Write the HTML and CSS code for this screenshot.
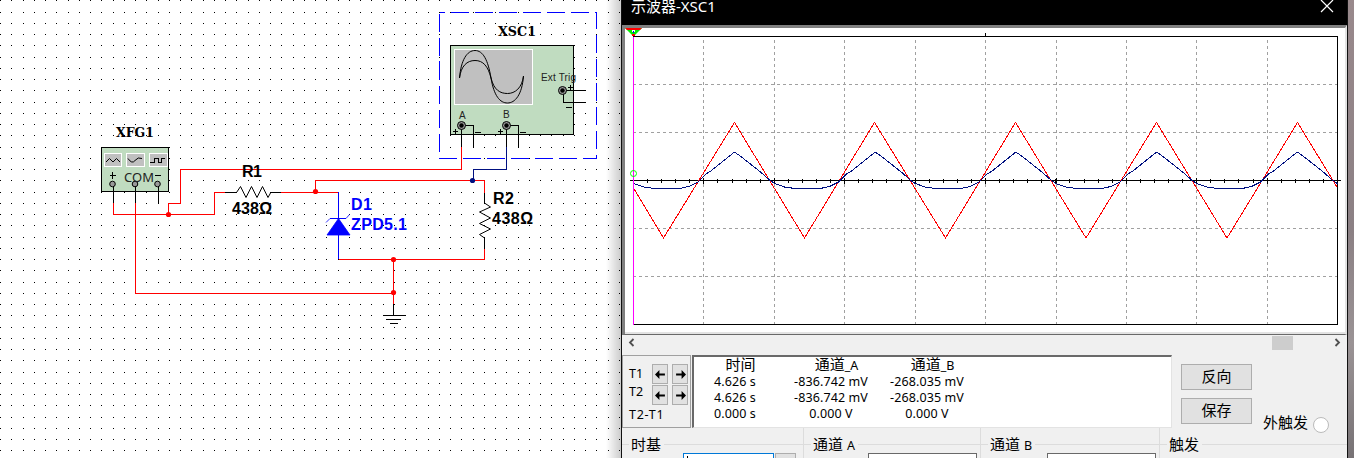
FILE: index.html
```html
<!DOCTYPE html>
<html lang="zh-CN">
<head>
<meta charset="utf-8">
<title>示波器-XSC1</title>
<link rel="stylesheet" href="styles.css">
</head>
<body>
<main class="desktop">
  <section class="schematic">
    <svg class="circuit" width="621" height="458" viewBox="0 0 621 458">
      <defs>
        <pattern id="dots" width="45" height="45" patternUnits="userSpaceOnUse">
          <path d="M0 .5h1m10 0h1m11 0h1m10 0h1M0 12.5h1m10 0h1m11 0h1m10 0h1M0 23.5h1m10 0h1m11 0h1m10 0h1M0 34.5h1m10 0h1m11 0h1m10 0h1" stroke="#000"/>
        </pattern>
        <linearGradient id="shade"><stop offset="0" stop-color="#000" stop-opacity="0"/><stop offset="1" stop-color="#000" stop-opacity=".2"/></linearGradient>
      </defs>
      <rect width="621" height="458" fill="url(#dots)"/>
      <rect x="606" width="15" height="458" fill="url(#shade)"/>
      <g class="crisp">
        <rect class="selection" x="439.5" y="12.5" width="157" height="146"/>
        <rect class="body" x="450.5" y="45.5" width="123" height="89"/>
        <rect x="454.5" y="49.5" width="78" height="55" fill="#c0c0c0" stroke="#fff"/>
        <rect class="body" x="101.5" y="147.5" width="67" height="44"/>
        <path d="M104.500 153.500h17v13h-17zM126.500 153.500h18v13h-18zM149.500 153.500h18v13h-18z" fill="#c0c0c0" stroke="#fff"/>
        <path class="red" d="M461.500 147v22.500h-281v34h-12v11M113.500 203v11.500h101v-22H225M281 192.500h57M315.500 192v-11.500h169V193M484.500 249v10.500h-146M135.500 203v90h258M393.500 259v46"/>
        <path class="navy" d="M506.500 147v22.500h-33v11"/>
        <path class="black" d="M461.500 125v22M461 125.500h12.500V147M506.500 125v22M506 125.500h12.500V147M562 90.500h24M563.500 90v12.500H586M113.500 184v19M135.500 184v19M158.500 184v19M225 192.500h12M270 192.500h11M484.500 193v10M484.500 238v11M393.500 304v11M383 315.500h23M386 319.500h15M390 323.500h8M150 162.500h4.500v-4h4v4h3v-4h3"/>
        <path d="M338.500 192v67M330 218.500h16" stroke="#00f" fill="none"/>
      </g>
      <path d="M338.500 218.500L350 235h-23zM346 218.500l3.500-4M330 218.500l-4 4" fill="#00f" stroke="#00f" stroke-width=".8"/>
      <path class="black" d="M236.500 192.500l4-6 5.500 11 5.500-11 5.500 11 5.500-11 5.500 11 2.500-4.500M484.500 203l6 4-11 5 11 6-11 5.500 11 5.500-11 5.500 5 3.500"/>
      <path class="black" d="M459.500 78C461 60 467 50.500 475 50.500S488 60 491 78 500 103 507.500 103 522 95 523.500 76M459.500 78C461 66 467 60.500 475 60.500S488 66 491 78 500 93.500 507.500 93.500 522 88 523.500 76M106 162l3.500-3.500 3.500 3.500 3.500-3.500 3.500 3.500M128 158.500q4 6 7 2t7-2"/>
      <g fill="#999" stroke="#000"><circle cx="461.500" cy="125.500" r="4"/><circle cx="506.500" cy="125.500" r="4"/><circle cx="562.500" cy="90.500" r="4"/><circle cx="112.500" cy="184" r="2.800"/><circle cx="135" cy="184" r="2.800"/><circle cx="157.500" cy="184" r="2.800"/></g>
      <g><circle cx="461.500" cy="125.500" r="2.200"/><circle cx="506.500" cy="125.500" r="2.200"/><circle cx="562.500" cy="90.500" r="2.200"/></g>
      <g fill="#f00"><circle cx="168.500" cy="214.500" r="2.600"/><circle cx="315.500" cy="191.500" r="2.600"/><circle cx="393.500" cy="259.500" r="2.600"/><circle cx="393.500" cy="292.500" r="2.600"/></g>
      <circle cx="472.500" cy="180.500" r="2.600" fill="#001080"/>
      <g class="name"><text x="498" y="36" textLength="38" lengthAdjust="spacingAndGlyphs">XSC1</text><text x="116" y="137" textLength="38" lengthAdjust="spacingAndGlyphs">XFG1</text></g>
      <g class="value"><text x="242" y="177" textLength="20">R1</text><text x="232" y="214" textLength="40">438Ω</text><text x="493" y="204" textLength="21">R2</text><text x="492" y="224" textLength="41">438Ω</text><g fill="#00f"><text x="351" y="210" textLength="21">D1</text><text x="351" y="230" textLength="56">ZPD5.1</text></g></g>
      <g class="pin"><text x="541" y="81" textLength="35">Ext Trig</text><text x="459" y="119">A</text><text x="503" y="118">B</text></g>
      <path class="black crisp" d="M453 131.500h5M455.500 129v5M498 131.500h5M500.500 129v5M568 87.500h5M570.500 85v5M475 132.500h6M520 132.500h6M566 107.500h6M110 175.500h6M112.500 172v7M155 175.500h6"/>
      <text class="com" x="124" y="182" textLength="30">COM</text>
    </svg>
  </section>

  <section class="window">
    <header class="titlebar"><span class="caption">示波器-XSC1</span>
      <svg class="close" width="14" height="14" viewBox="0 0 14 14"><path d="M1 1l12 12M13 1L1 13" stroke="#fff" stroke-width="1.200"/></svg>
    </header>
    <div class="scope">
      <svg width="720" height="304" viewBox="625 28 720 304">
        <defs>
          <path id="wave" d="M0 152l7 5 19 15 9 8 5 3.500 10 3.500 7 1h31l7-1.500 9-4.500 8-8 5-3L140.700 152"/>
          <clipPath id="plot"><rect x="633" y="36" width="705" height="289"/></clipPath>
        </defs>
        <g class="crisp">
          <path class="grid" d="M703.500 40v284M774.500 40v284M844.500 40v284M915.500 40v284M985.500 40v284M1056.500 40v284M1126.500 40v284M1196.500 40v284M1267.500 40v284M633 84.500h704M633 132.500h704M633 228.500h704M633 276.500h704"/>
          <path class="black" d="M633 36.500h704.500v288H633M985.500 33v4M630 180.500h711"/>
          <path class="black" d="M703.500 178v6M774.500 178v6M844.500 178v6M915.500 178v6M985.500 178v6M1056.500 178v6M1126.500 178v6M1196.500 178v6M1267.500 178v6"/>
          <path d="M633 181h705" stroke="#000" stroke-width="4" stroke-dasharray="1 13.080" fill="none"/>
        </g>
        <path class="red trace" d="M633.500 188L663.500 238 734.500 122.500 804.500 238 874.500 122.500 945.500 238 1015.500 122.500 1086 238 1156.500 122.500 1227 238 1297.500 122.500 1337 187"/>
        <g class="navy trace" clip-path="url(#plot)"><use href="#wave" x="593.800"/><use href="#wave" x="734.500"/><use href="#wave" x="875.200"/><use href="#wave" x="1015.900"/><use href="#wave" x="1156.600"/><use href="#wave" x="1297.300"/></g>
        <rect x="633" y="37" width="1" height="288" fill="#f0f"/>
        <circle cx="633.500" cy="173.500" r="3" fill="none" stroke="#0f0"/>
        <path d="M625 28h17l-8 8h-1z" fill="#0e0"/><path d="M625 28h17l-2 2h-13z" fill="#f00"/><path d="M632 30h3v2h-3z" fill="#fff"/><path d="M633 31h1v2h-1z" fill="#00f"/><path d="M632 34h3v2h-3z" fill="#f00"/>
      </svg>
    </div>
    <div class="scroll">
      <svg width="7" height="9" viewBox="0 0 7 9"><path d="M5.500 1L2 4.500 5.500 8" class="chev"/></svg>
      <i class="thumb"></i>
      <svg width="7" height="9" viewBox="0 0 7 9"><path d="M1.500 1L5 4.500 1.500 8" class="chev"/></svg>
    </div>
    <div class="readout">
      <div class="cursors">
        <div class="crow"><span>T1</span><b class="step"><svg viewBox="0 0 10 10"><path d="M0 5l4-4v3h5v2H4v3z"/></svg></b><b class="step"><svg viewBox="0 0 10 10"><path d="M10 5L6 1v3H1v2h5v3z"/></svg></b></div>
        <div class="crow"><span>T2</span><b class="step"><svg viewBox="0 0 10 10"><path d="M0 5l4-4v3h5v2H4v3z"/></svg></b><b class="step"><svg viewBox="0 0 10 10"><path d="M10 5L6 1v3H1v2h5v3z"/></svg></b></div>
        <div class="diff">T2-T1</div>
      </div>
      <div class="table">
        <div class="col time"><span class="head">时间</span><span>4.626 s</span><span>4.626 s</span><span>0.000 s</span></div>
        <div class="col"><span class="head">通道<em>_A</em></span><span>-836.742 mV</span><span>-836.742 mV</span><span>0.000 V</span></div>
        <div class="col"><span class="head">通道<em>_B</em></span><span>-268.035 mV</span><span>-268.035 mV</span><span>0.000 V</span></div>
      </div>
      <div class="actions"><span class="btn">反向</span><span class="btn">保存</span></div>
      <div class="ext"><span>外触发</span><i class="radio"></i></div>
    </div>
    <div class="groups">
      <div class="group base"><div class="legend"><span>时基</span></div><i class="field focus"></i><i class="caret"></i><i class="spin"></i></div>
      <div class="group cha"><div class="legend"><span>通道 <em>A</em></span></div><i class="field"></i></div>
      <div class="group chb"><div class="legend"><span>通道 <em>B</em></span></div><i class="field"></i></div>
      <div class="group trig"><div class="legend"><span>触发</span></div></div>
    </div>
  </section>
  <div class="backdrop"></div>
</main>
</body>
</html>
```
FILE: styles.css
```css
* { box-sizing: border-box; }
body { margin: 0; overflow: hidden; background: #fff; font-family: "Noto Sans", "Noto Sans CJK SC", sans-serif; font-size: 12.5px; color: #000; }
em, i, b { font-style: normal; }
svg { display: block; }
.desktop { display: flex; width: 1354px; height: 458px; overflow: hidden; }
.schematic { width: 621px; flex: none; }
.crisp { shape-rendering: crispEdges; }
.black { stroke: #000; fill: none; }
.red { stroke: #f00; fill: none; }
.navy { stroke: #001080; fill: none; }
.trace { shape-rendering: crispEdges; stroke-width: 1; }
.selection { fill: none; stroke: #00f; stroke-dasharray: 18 6; stroke-dashoffset: 13; }
.body { fill: #c0dcc0; stroke: #000; }
.name { font: bold 13px "DejaVu Serif", serif; }
.value { font: bold 16px "Liberation Sans", sans-serif; }
.pin { font: 10px "Liberation Sans", sans-serif; fill: #222; }
.com { font: 13px "Noto Sans", sans-serif; fill: #222; }
.grid { stroke: #a0a0a0; stroke-dasharray: 3 3; fill: none; }

.window { width: 727px; flex: none; background: #f0f0f0; border: solid #111; border-width: 0 1px; display: flex; flex-direction: column; }
.titlebar { height: 25px; flex: none; background: #000; color: #fff; display: flex; justify-content: space-between; padding: 0 13px 0 9px; }
.caption { font-size: 15px; line-height: 20px; margin-top: -4px; white-space: nowrap; }
.close { margin-top: -1px; }
.scope { height: 310px; flex: none; background: #fff; border: 1px solid #696969; border-top: 3px solid #808080; border-left: 3px solid #808080; border-right: 2px solid #e3e3e3; box-shadow: inset 0 -2px #e3e3e3; overflow: hidden; }
.scroll { height: 20px; flex: none; display: flex; align-items: center; padding: 0 6px 5px 6px; }
.thumb { width: 21px; height: 14px; margin-left: 637px; margin-right: auto; background: #cdcdcd; }
.chev { fill: none; stroke: #505050; stroke-width: 1.800; }
.readout { height: 73px; flex: none; display: flex; }
.cursors { width: 69px; border: 1px solid #a0a0a0; padding: 8px 0 0 6px; }
.crow { display: flex; height: 20px; margin-bottom: 1px; gap: 4px; }
.crow span { width: 19px; line-height: 20px; }
.crow + .crow span { margin-top: -3px; }
.step { width: 16px; height: 20px; background: #e1e1e1; border: 1px solid #adadad; display: grid; place-items: center; }
.step svg { width: 11px; height: 11px; }
.diff { line-height: 17px; letter-spacing: .7px; }
.table { width: 480px; margin-left: 1px; background: #fff; border: 1px solid #e3e3e3; border-top: 2px solid #696969; border-left: 2px solid #696969; display: flex; padding-left: 8px; }
.col { width: 98px; display: flex; flex-direction: column; align-items: center; line-height: 16px; white-space: nowrap; letter-spacing: .1px; }
.col + .col + .col { width: 96px; margin-left: -1px; }
.time { width: 66px; margin: 0 14px 0 0; }
.head { height: 17px; line-height: 14px; font-family: "Noto Sans CJK SC", sans-serif; font-size: 15px; letter-spacing: 0; margin-left: 11px; }
.head em { font: 12.5px/14px "Noto Sans", sans-serif; }
.actions { margin: 9px 0 0 9px; display: flex; flex-direction: column; gap: 8px; }
.btn { width: 71px; height: 26px; background: #e1e1e1; border: 1px solid #adadad; font-size: 15px; line-height: 22px; text-align: center; }
.ext { margin: 57px 0 0 11px; display: flex; height: 24px; font-size: 15px; line-height: 20px; white-space: nowrap; }
.radio { width: 16px; height: 16px; margin: 5px 0 0 5px; border: 1px solid #bbb; border-radius: 50%; background: #fff; flex: none; }
.groups { display: flex; height: 30px; flex: none; }
.group { padding-top: 4px; height: 30px; position: relative; }
.legend { display: flex; height: 25px; line-height: 25px; align-items: center; font-size: 15px; white-space: nowrap; }
.legend::before, .legend::after { content: ""; height: 1px; background: #dcdcdc; }
.legend::before { width: 7px; margin-right: 2px; }
.legend::after { flex: 1; margin-left: 3px; }
.legend em { font-size: 12.5px; }
.base { width: 181px; }
.cha { width: 177px; border-left: 1px solid #dcdcdc; }
.chb { width: 179px; border-left: 1px solid #dcdcdc; }
.trig { width: 188px; border-left: 1px solid #dcdcdc; }
.field, .spin { position: absolute; top: 25px; left: 64px; width: 109px; height: 10px; border: 1px solid #696969; background: #fff; }
.chb .field { left: 66px; }
.field.focus { left: 61px; width: 91px; border-color: #0078d7; }
.caret { position: absolute; top: 28px; left: 65px; width: 1px; height: 8px; background: #000; }
.spin { left: 153px; width: 21px; background: #e1e1e1; border-color: #adadad; }
.backdrop { flex: 1; background: linear-gradient(#99898c, #8b8084 50%, #9a9395 75%, #777275); }
```
